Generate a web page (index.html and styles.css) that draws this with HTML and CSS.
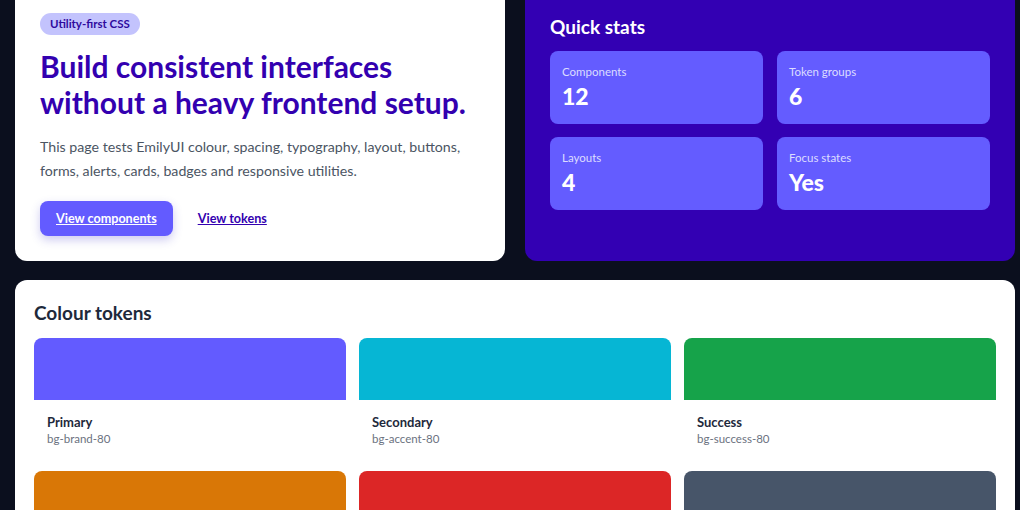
FILE: index.html
```html
<!DOCTYPE html>
<html lang="en">
<head>
    <meta charset="UTF-8">
    <meta name="viewport" content="width=device-width, initial-scale=1.0">
    <title>EmilyUI test page</title>
    <link rel="stylesheet" href="styles.css">
</head>
<body>
    <main class="page">
        <div class="top-row">
            <section class="card hero">
                <span class="badge">Utility-first CSS</span>
                <h1>Build consistent interfaces without a heavy frontend setup.</h1>
                <p class="lead">This page tests EmilyUI colour, spacing, typography, layout, buttons, forms, alerts, cards, badges and responsive utilities.</p>
                <div class="actions">
                    <a href="#components" class="btn-primary">View components</a>
                    <a href="#tokens" class="link">View tokens</a>
                </div>
            </section>

            <section class="card stats">
                <h2>Quick stats</h2>
                <div class="stat-grid">
                    <div class="stat">
                        <span class="stat-label">Components</span>
                        <strong class="stat-value">12</strong>
                    </div>
                    <div class="stat">
                        <span class="stat-label">Token groups</span>
                        <strong class="stat-value">6</strong>
                    </div>
                    <div class="stat">
                        <span class="stat-label">Layouts</span>
                        <strong class="stat-value">4</strong>
                    </div>
                    <div class="stat">
                        <span class="stat-label">Focus states</span>
                        <strong class="stat-value">Yes</strong>
                    </div>
                </div>
            </section>
        </div>

        <section class="card tokens" id="tokens">
            <h2>Colour tokens</h2>
            <div class="swatch-grid">
                <div class="swatch">
                    <div class="swatch-colour bg-brand"></div>
                    <div class="swatch-info">
                        <strong>Primary</strong>
                        <span>bg-brand-80</span>
                    </div>
                </div>
                <div class="swatch">
                    <div class="swatch-colour bg-accent"></div>
                    <div class="swatch-info">
                        <strong>Secondary</strong>
                        <span>bg-accent-80</span>
                    </div>
                </div>
                <div class="swatch">
                    <div class="swatch-colour bg-success"></div>
                    <div class="swatch-info">
                        <strong>Success</strong>
                        <span>bg-success-80</span>
                    </div>
                </div>
                <div class="swatch">
                    <div class="swatch-colour bg-warning"></div>
                    <div class="swatch-info">
                        <strong>Warning</strong>
                        <span>bg-warning-80</span>
                    </div>
                </div>
                <div class="swatch">
                    <div class="swatch-colour bg-danger"></div>
                    <div class="swatch-info">
                        <strong>Danger</strong>
                        <span>bg-danger-80</span>
                    </div>
                </div>
                <div class="swatch">
                    <div class="swatch-colour bg-neutral"></div>
                    <div class="swatch-info">
                        <strong>Neutral</strong>
                        <span>bg-neutral-80</span>
                    </div>
                </div>
            </div>
        </section>
    </main>
</body>
</html>
```

FILE: styles.css
```css
body, html {
    margin: 0;
    padding: 0;
    font-family: 'Lato', 'Noto Sans', sans-serif;
    background-color: #0b0f1e;
}
.page {
    width: 1000px;
    margin-left: 15px;
    margin-top: -13px;
    display: flex;
    flex-direction: column;
    gap: 19px;
}
.top-row {
    display: grid;
    grid-template-columns: 1fr 1fr;
    gap: 20px;
}
.card {
    background-color: white;
    border-radius: 12px;
    padding: 25px;
}

/* hero */
.badge {
    display: inline-block;
    padding: 3px 10px;
    background-color: #c3c3fd;
    color: #2f0a9e;
    font-size: 11.5px;
    line-height: 16px;
    font-weight: 700;
    border-radius: 999px;
}
.hero h1 {
    margin: 13px 0 15px;
    color: #3300b0;
    font-size: 30px;
    line-height: 36px;
    font-weight: 700;
}
.lead {
    margin: 0 0 18px;
    color: #4b5563;
    font-size: 14.2px;
    line-height: 24px;
}
.actions {
    display: flex;
    align-items: center;
    gap: 25px;
}
.btn-primary {
    display: inline-block;
    padding: 9px 16px;
    background-color: #635bff;
    color: white;
    font-size: 12.6px;
    line-height: 17px;
    font-weight: 700;
    border-radius: 8px;
    box-shadow: 0 4px 10px rgba(60, 50, 200, 0.25);
}
.link {
    color: #3300b0;
    font-size: 12.6px;
    font-weight: 700;
}

/* stats */
.stats {
    background-color: #3300b3;
    color: white;
}
.stats h2 {
    margin: 1px 0 10px;
    font-size: 19px;
    line-height: 28px;
}
.stat-grid {
    display: grid;
    grid-template-columns: 1fr 1fr;
    gap: 13px 14px;
}
.stat {
    display: flex;
    flex-direction: column;
    gap: 2px;
    padding: 13px 12px 14px;
    background-color: #645cff;
    border-radius: 8px;
}
.stat-label {
    font-size: 11.5px;
    line-height: 16px;
    color: #dcdcff;
}
.stat-value {
    font-size: 23px;
    line-height: 28px;
    font-weight: 900;
}

/* colour tokens */
.tokens {
    padding: 19px 19px 25px;
}
.tokens h2 {
    margin: 0 0 11px;
    color: #1e293b;
    font-size: 19px;
    line-height: 28px;
}
.swatch-grid {
    display: grid;
    grid-template-columns: repeat(3, 1fr);
    gap: 13px;
}
.swatch {
    border-radius: 8px;
    background-color: white;
}
.swatch-colour {
    height: 62px;
    border-radius: 8px 8px 0 0;
}
.swatch-info {
    display: flex;
    flex-direction: column;
    padding: 14px 13px 11px;
}
.swatch-info strong {
    font-size: 13px;
    line-height: 17px;
    color: #1e293b;
}
.swatch-info span {
    font-size: 11.5px;
    line-height: 16px;
    color: #6b7280;
}
.bg-brand { background-color: #635bff; }
.bg-accent { background-color: #06b6d4; }
.bg-success { background-color: #16a34a; }
.bg-warning { background-color: #d97706; }
.bg-danger { background-color: #dc2626; }
.bg-neutral { background-color: #475569; }
```
